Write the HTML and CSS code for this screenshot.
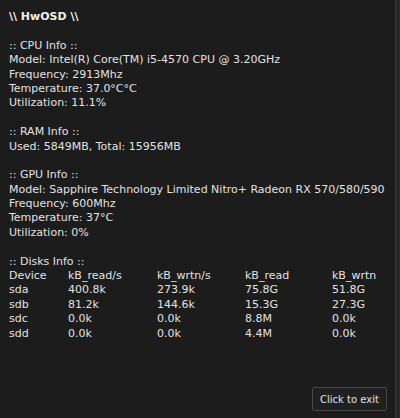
FILE: index.html
```html
<!DOCTYPE html>
<html>
<head>
<meta charset="utf-8">
<link rel="stylesheet" href="styles.css">
</head>
<body>
<div class="app">
  <main class="osd">
    <div class="line title">\\ HwOSD \\</div>
    <div class="line blank"></div>
    <div class="line">:: CPU Info ::</div>
    <div class="line">Model: Intel(R) Core(TM) i5-4570 CPU @ 3.20GHz</div>
    <div class="line">Frequency: 2913Mhz</div>
    <div class="line">Temperature: 37.0°C°C</div>
    <div class="line">Utilization: 11.1%</div>
    <div class="line blank"></div>
    <div class="line">:: RAM Info ::</div>
    <div class="line">Used: 5849MB, Total: 15956MB</div>
    <div class="line blank"></div>
    <div class="line">:: GPU Info ::</div>
    <div class="line">Model: Sapphire Technology Limited Nitro+ Radeon RX 570/580/590</div>
    <div class="line">Frequency: 600Mhz</div>
    <div class="line">Temperature: 37°C</div>
    <div class="line">Utilization: 0%</div>
    <div class="line blank"></div>
    <div class="line">:: Disks Info ::</div>
    <div class="disks">
      <span>Device</span><span>kB_read/s</span><span>kB_wrtn/s</span><span>kB_read</span><span>kB_wrtn</span>
      <span>sda</span><span>400.8k</span><span>273.9k</span><span>75.8G</span><span>51.8G</span>
      <span>sdb</span><span>81.2k</span><span>144.6k</span><span>15.3G</span><span>27.3G</span>
      <span>sdc</span><span>0.0k</span><span>0.0k</span><span>8.8M</span><span>0.0k</span>
      <span>sdd</span><span>0.0k</span><span>0.0k</span><span>4.4M</span><span>0.0k</span>
    </div>
    <div class="footer">
      <button class="exit">Click to exit</button>
    </div>
  </main>
  <div class="scrollbar"></div>
</div>
</body>
</html>
```
FILE: styles.css
```css
html, body {
  margin: 0;
  padding: 0;
  height: 100%;
  background: #1c1c1c;
}
.app {
  display: flex;
  height: 418px;
  width: 400px;
}
.osd {
  flex: 1;
  display: flex;
  flex-direction: column;
  padding: 10px 0 0 9px;
  font-family: "DejaVu Sans", sans-serif;
  font-size: 11px;
  line-height: 14.4px;
  color: #e2e2e2;
}
.line {
  height: 14.4px;
  white-space: nowrap;
}
.title {
  font-weight: bold;
  color: #f0f0f0;
}
.disks {
  display: grid;
  grid-template-columns: 59px 89px 88px 87px auto;
  grid-auto-rows: 14.4px;
}
.footer {
  margin-top: auto;
  display: flex;
  justify-content: flex-end;
  padding: 0 8px 7px 0;
}
.exit {
  width: 75px;
  height: 24px;
  padding: 0;
  background: #202020;
  border: 1px solid #474747;
  border-radius: 2px;
  color: #e2e2e2;
  font-family: "DejaVu Sans", sans-serif;
  font-size: 10px;
}
.scrollbar {
  width: 4px;
  background: #282828;
  border-left: 1px solid #3a3a3a;
}
```
